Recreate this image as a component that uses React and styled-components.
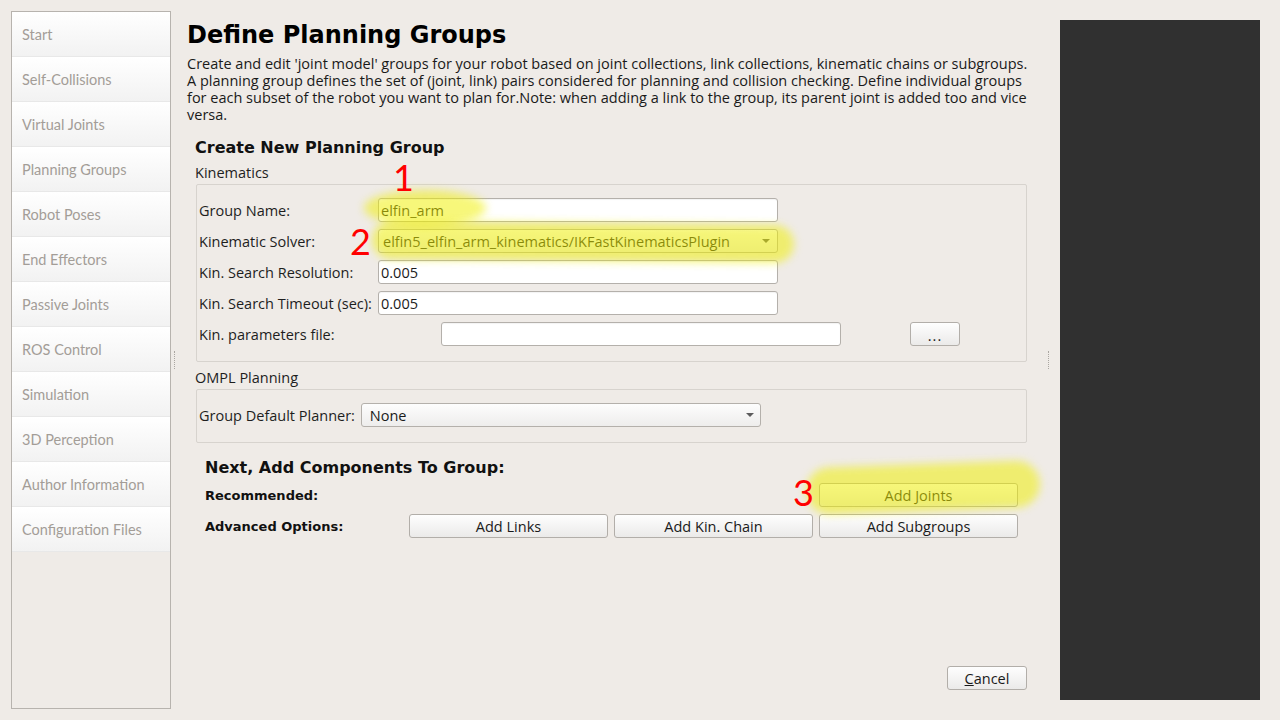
import React from 'react';
import styled, { createGlobalStyle } from 'styled-components';

const UI = `"Open Sans", "Noto Sans", sans-serif`;
const NAV = `"Lato", "Open Sans", sans-serif`;
const HEAD = `"DejaVu Sans", "Liberation Sans", sans-serif`;
const FS = '14.5px';

const Global = createGlobalStyle`
  html, body { margin: 0; padding: 0; background: #efebe7; }
  body { font-family: ${UI}; font-size: ${FS}; color: #262626; }
  * { box-sizing: border-box; }
`;

const Window = styled.div`
  position: relative;
  display: flex;
  width: 1280px;
  height: 720px;
  padding: 11px 0 11px 11px;
  overflow: hidden;
  background: #efebe7;
`;

const Sidebar = styled.nav`
  flex: none;
  width: 160px;
  height: 698px;
  border: 1px solid #b7b3ae;
  display: flex;
  flex-direction: column;
  background: #efebe7;
`;

const NavItem = styled.div`
  flex: none;
  height: 45px;
  display: flex;
  align-items: center;
  padding-left: 10px;
  background: linear-gradient(#ffffff, #f2f2f2);
  border-bottom: 1px solid #e8e8e8;
  color: #a39d97;
  font: 14.5px ${NAV};
`;

const Splitter = styled.div`
  flex: none;
  width: ${(p) => p.$w}px;
  display: flex;
  align-items: center;
  padding-left: ${(p) => p.$pad}px;
`;

const Grip = styled.span`
  width: 1px;
  height: 18px;
  border-left: 1px dotted #aaa6a1;
`;

const Main = styled.main`
  flex: none;
  width: 840px;
  display: flex;
  flex-direction: column;
`;

const Title = styled.h1`
  margin: 10px 0 0;
  font: bold 24px/28px ${HEAD};
  color: #000;
`;

const Intro = styled.p`
  margin: 6px 0 0;
  font-size: ${FS};
  line-height: 17px;
  white-space: nowrap;
  color: #1a1a1a;
`;

const Section = styled.section`
  display: flex;
  flex-direction: column;
  padding-left: ${(p) => p.$pad}px;
  margin-top: ${(p) => p.$mt}px;
`;

const SectionTitle = styled.h2`
  margin: 0;
  font: bold 16px/19px ${HEAD};
  color: #111;
`;

const BoxLabel = styled.div`
  margin-top: ${(p) => p.$mt}px;
  line-height: 17px;
  color: #1e1e1e;
`;

const GroupBox = styled.div`
  margin: 3px 0 0 1px;
  border: 1px solid #d7d3ce;
  border-radius: 2px;
  padding: 13px 0 15px 2px;
`;

const FormGrid = styled.div`
  display: grid;
  grid-template-columns: ${(p) => p.$cols};
  row-gap: 7px;
  align-items: center;
  margin-top: ${(p) => p.$mt || 0}px;
`;

const Label = styled.span`
  color: #1e1e1e;
  line-height: 17px;
  white-space: nowrap;
`;

const TextInput = styled.input`
  height: 24px;
  width: 400px;
  margin: 0;
  border: 1px solid #b4b0ab;
  border-radius: 3px;
  background: #fff;
  padding: 0 2px;
  font: ${FS} ${UI};
  color: #1a1a1a;
  outline: none;
  box-shadow: inset 0 1px 1px rgba(0, 0, 0, 0.05);
`;

const Combo = styled.div`
  height: 24px;
  width: 400px;
  border: 1px solid #b4b0ab;
  border-radius: 3px;
  background: linear-gradient(#fdfdfd, #eeedec);
  display: flex;
  align-items: center;
  justify-content: space-between;
  padding: 0 ${(p) => p.$caretPad}px 0 4px;
  color: #1a1a1a;
  white-space: nowrap;
`;

const Caret = styled.span`
  flex: none;
  width: 0;
  height: 0;
  border-left: 4px solid transparent;
  border-right: 4px solid transparent;
  border-top: 4px solid #5c5c5c;
`;

const Button = styled.button`
  height: 24px;
  width: ${(p) => p.$w || 199}px;
  margin: 0;
  padding: 0;
  border: 1px solid #b2aea9;
  border-radius: 3px;
  background: linear-gradient(#fefefe, #ebeae9);
  font: ${FS} ${UI};
  color: #1a1a1a;
  grid-column: ${(p) => p.$col || 'auto'};
`;

const DotsButton = styled(Button)`
  line-height: 26px;
  letter-spacing: 1px;
`;

const ComponentsGrid = styled.div`
  display: grid;
  grid-template-columns: 198px 199px 199px 199px;
  column-gap: 6px;
  row-gap: 7px;
  align-items: center;
  margin-top: 6px;
`;

const RowLabel = styled.span`
  font: bold 13px ${HEAD};
  color: #111;
`;

const Spacer = styled.div`
  flex: 1;
`;

const Footer = styled.div`
  display: flex;
  justify-content: flex-end;
  margin-bottom: 19px;
`;

const Mnemonic = styled.span`
  text-decoration: underline;
`;

const Viewer = styled.div`
  flex: none;
  width: 200px;
  margin: 9px 0;
  background: #303030;
`;

const Marker = styled.div`
  position: absolute;
  left: ${(p) => p.$x}px;
  top: ${(p) => p.$y}px;
  width: ${(p) => p.$w}px;
  height: ${(p) => p.$h}px;
  border-radius: ${(p) => p.$r};
  background: rgba(240, 240, 0, 0.52);
  filter: blur(4px);
  transform: rotate(${(p) => p.$rot || 0}deg);
  pointer-events: none;
`;

const Num = styled.span`
  position: absolute;
  left: ${(p) => p.$x}px;
  top: ${(p) => p.$y}px;
  font: 36px/36px ${NAV};
  color: #ff0000;
  pointer-events: none;
`;

const navItems = [
  'Start',
  'Self-Collisions',
  'Virtual Joints',
  'Planning Groups',
  'Robot Poses',
  'End Effectors',
  'Passive Joints',
  'ROS Control',
  'Simulation',
  '3D Perception',
  'Author Information',
  'Configuration Files',
];

export default function App() {
  return (
    <>
      <Global />
      <Window>
        <Sidebar>
          {navItems.map((n) => (
            <NavItem key={n}>{n}</NavItem>
          ))}
        </Sidebar>
        <Splitter $w={16} $pad={3}>
          <Grip />
        </Splitter>
        <Main>
          <Title>Define Planning Groups</Title>
          <Intro>
            Create and edit 'joint model' groups for your robot based on joint collections, link collections, kinematic chains or subgroups.
            <br />
            A planning group defines the set of (joint, link) pairs considered for planning and collision checking. Define individual groups
            <br />
            for each subset of the robot you want to plan for.Note: when adding a link to the group, its parent joint is added too and vice
            <br />
            versa.
          </Intro>

          <Section $pad={8} $mt={15}>
            <SectionTitle>Create New Planning Group</SectionTitle>
            <BoxLabel $mt={7}>Kinematics</BoxLabel>
            <GroupBox>
              <FormGrid $cols="179px 400px">
                <Label>Group Name:</Label>
                <TextInput readOnly value="elfin_arm" />
                <Label>Kinematic Solver:</Label>
                <Combo $caretPad={7}>
                  <span>elfin5_elfin_arm_kinematics/IKFastKinematicsPlugin</span>
                  <Caret />
                </Combo>
                <Label>Kin. Search Resolution:</Label>
                <TextInput readOnly value="0.005" />
                <Label>Kin. Search Timeout (sec):</Label>
                <TextInput readOnly value="0.005" />
              </FormGrid>
              <FormGrid $cols="242px 400px 69px 50px" $mt={7}>
                <Label>Kin. parameters file:</Label>
                <TextInput readOnly value="" />
                <span />
                <DotsButton $w={50}>...</DotsButton>
              </FormGrid>
            </GroupBox>

            <BoxLabel $mt={7}>OMPL Planning</BoxLabel>
            <GroupBox>
              <FormGrid $cols="162px 400px">
                <Label>Group Default Planner:</Label>
                <Combo $caretPad={6}>
                  <span>&nbsp;None</span>
                  <Caret />
                </Combo>
              </FormGrid>
            </GroupBox>
          </Section>

          <Section $pad={18} $mt={15}>
            <SectionTitle>Next, Add Components To Group:</SectionTitle>
            <ComponentsGrid>
              <RowLabel>Recommended:</RowLabel>
              <Button $col={4}>Add Joints</Button>
              <RowLabel>Advanced Options:</RowLabel>
              <Button>Add Links</Button>
              <Button>Add Kin. Chain</Button>
              <Button>Add Subgroups</Button>
            </ComponentsGrid>
          </Section>

          <Spacer />
          <Footer>
            <Button $w={80}>
              <Mnemonic>C</Mnemonic>ancel
            </Button>
          </Footer>
        </Main>
        <Splitter $w={33} $pad={21}>
          <Grip />
        </Splitter>
        <Viewer />

        <Marker $x={364} $y={190} $w={122} $h={36} $r="50% / 50%" />
        <Marker $x={372} $y={223} $w={422} $h={38} $r="20px" $rot={0.6} />
        <Marker $x={806} $y={464} $w={234} $h={47} $r="24px" $rot={-2} />
        <Num $x={393} $y={159}>1</Num>
        <Num $x={350} $y={223}>2</Num>
        <Num $x={793} $y={474}>3</Num>
      </Window>
    </>
  );
}
